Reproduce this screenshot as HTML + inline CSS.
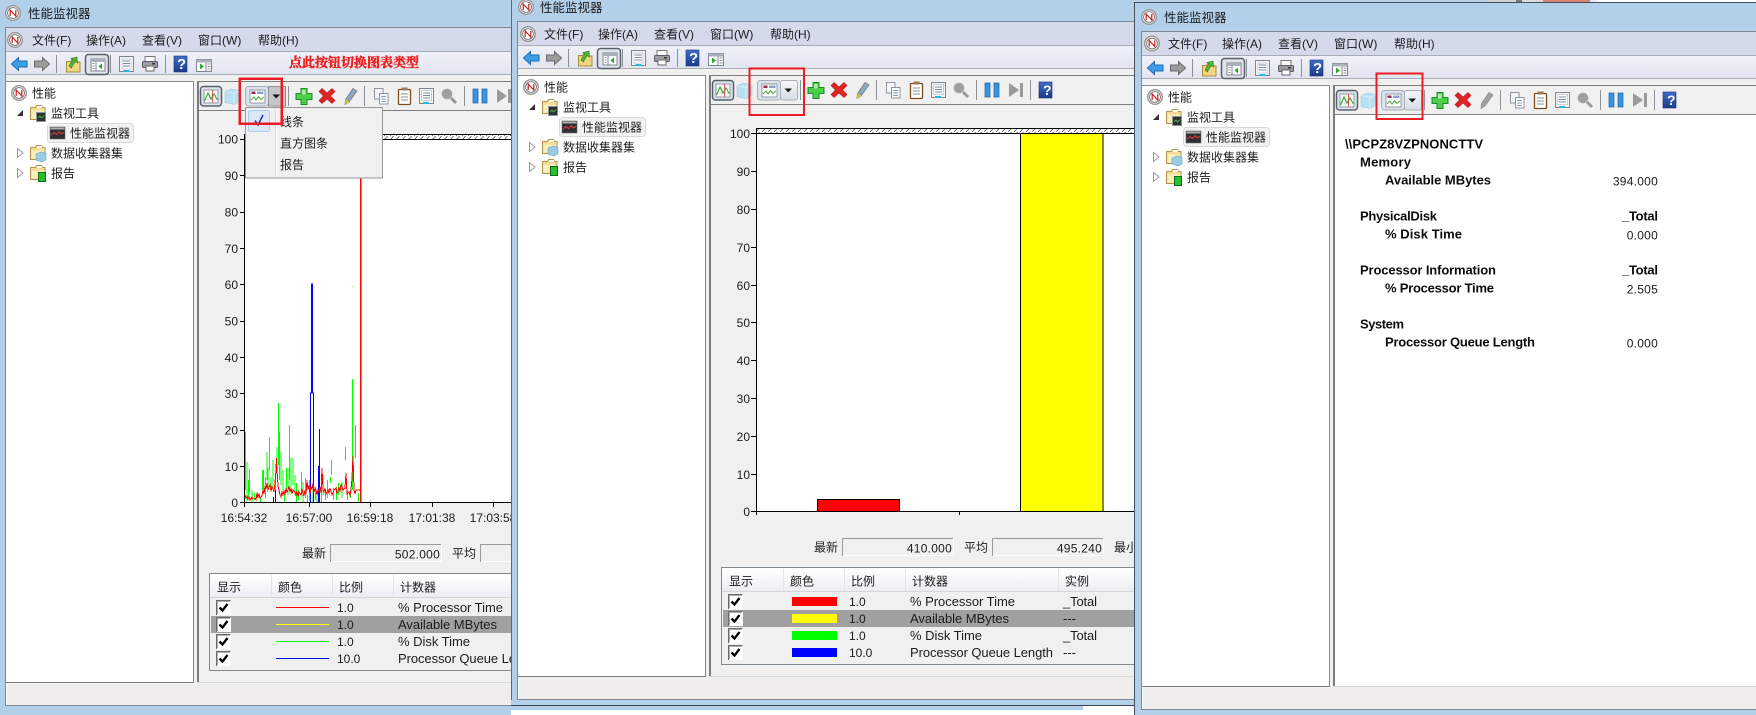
<!DOCTYPE html>
<html lang="zh"><head><meta charset="utf-8"><title>性能监视器</title>
<style>
html,body{margin:0;padding:0;background:#fff;width:1756px;height:715px;overflow:hidden}
svg{display:block}
text{font:12px "Liberation Sans","Noto Sans CJK SC",sans-serif;fill:#1c1c1c;shape-rendering:auto}
.b{font-weight:bold;font-size:13px;fill:#0c0c0c}
.l{font-size:13px}
.v{letter-spacing:.25px}
.ic{shape-rendering:auto}
</style></head><body>
<svg width="1756" height="715" viewBox="0 0 1756 715" xmlns="http://www.w3.org/2000/svg" shape-rendering="crispEdges">
<defs>
<linearGradient id="gt" x1="0" y1="0" x2="0" y2="1"><stop offset="0" stop-color="#eff1f9"/><stop offset="1" stop-color="#e2e5f0"/></linearGradient>
<linearGradient id="gh" x1="0" y1="0" x2="0" y2="1"><stop offset="0" stop-color="#fff"/><stop offset="1" stop-color="#eceef2"/></linearGradient>
<linearGradient id="gq" x1="0" y1="0" x2="0" y2="1"><stop offset="0" stop-color="#3f6cc8"/><stop offset="1" stop-color="#1c3a8c"/></linearGradient>
<linearGradient id="gb" x1="0" y1="0" x2="0" y2="1"><stop offset="0" stop-color="#f5f7fb"/><stop offset="1" stop-color="#d6dce6"/></linearGradient>
<pattern id="hatch" width="6" height="4" patternUnits="userSpaceOnUse"><rect width="6" height="4" fill="#fff"/><path d="M0 4L3.500 0" stroke="#333" stroke-width=".6" shape-rendering="auto"/></pattern>

<g id="logo" class="ic"><circle r="7.300" fill="#f4f2ee" stroke="#9a9896" stroke-width="1.400"/><circle r="5.400" fill="#fff" stroke="#6c6c6c" stroke-width=".8"/><path d="M-2.800 3V-3L2.800 3V-3" fill="none" stroke="#c62020" stroke-width="1.200"/></g>

<g id="folder" class="ic"><path d="M.5 2.500h5l1-2h5l1 2h2.500v12H.5z" fill="#f5dc96" stroke="#ad9550"/><path d="M1.500 5.500h13v8h-13z" fill="#fbeebd"/><rect x="7" y="1" width="5" height="2" fill="#fff"/></g>

<g id="base">
<rect x="-1" y="-10" width="730" height="740" fill="#b3d0eb"/>
<rect x="5" y="27" width="710" height="679" fill="#7f8892"/>
<rect x="6" y="28" width="708" height="677" fill="#f0f0f0"/>
<rect x="6" y="28" width="708" height="23" fill="#d5daea"/>
<rect x="6" y="51" width="708" height="1" fill="#a6aab3"/>
<rect x="6" y="52" width="708" height="22" fill="url(#gt)"/>
<rect x="6" y="74" width="708" height="1" fill="#a9adb7"/>
<rect x="6" y="81" width="187" height="601" fill="#fff"/>
<rect x="6" y="81" width="188" height="1" fill="#8a8a8a"/>
<rect x="193" y="81" width="1" height="602" fill="#8a8a8a"/>
<rect x="6" y="682" width="188" height="1" fill="#7c7c7c"/>
<rect x="197" y="81" width="2" height="602" fill="#7c7c7c"/>
<rect x="197" y="81" width="520" height="1" fill="#7c7c7c"/>
<rect x="199" y="110" width="520" height="1" fill="#808080"/>
<rect x="197" y="682" width="520" height="1" fill="#d8d8d8"/>
<rect x="6" y="683" width="708" height="22" fill="#f0eeed"/>
<rect x="6" y="683" width="1" height="22" fill="#fff"/>
<use href="#tb"/><use href="#ct"/><use href="#tr"/>
</g>

<g id="tb" class="ic">
<path d="M11.500 64L18.500 57.500V61H27V67H18.500V70.500Z" fill="#3c9fe6" stroke="#1c6db4"/>
<path d="M49.500 64L42.500 57.500V61H34.500V67H42.500V70.500Z" fill="#9c9c9c" stroke="#6c6c6c"/>
<path d="M56.500 55V73M110.500 55V73M165.500 55V73" stroke="#8c9099" fill="none"/>
<path d="M66.500 61.500h4l1-1.500h2v2h6.500v10h-13.500z" fill="#f2d582" stroke="#a88c3c"/>
<path d="M69 66Q71 62 73 60L71 58.500L77 57L77.500 63L75.500 61.500Q73 64 71.500 68Z" fill="#52b834" stroke="#2c7a1c" stroke-width=".6"/>
<rect x="85.500" y="54.500" width="23" height="20" rx="3" fill="#dfe3ea" stroke="#59626c" stroke-width="1.500"/>
<rect x="91" y="59" width="14" height="12" fill="#fff" stroke="#7c8490"/><rect x="91" y="59" width="14" height="3" fill="#a8b0bc"/><path d="M96 62V71" stroke="#7c8490"/><path d="M92.500 63.500h2M92.500 66h2M92.500 68.500h2" stroke="#8a94a0"/><path d="M102 63.500L98.500 66.500L102 69.500Z" fill="#2fa52f"/>
<rect x="119.500" y="56.500" width="14" height="15" fill="#f4f6f8" stroke="#7d8792"/><rect x="122" y="59" width="9" height="10" fill="#fff" stroke="#aab2bc" stroke-width=".6"/><path d="M123 61h7M123 63.500h7M123 66h7" stroke="#6f8aa8"/><rect x="123.500" y="70" width="6" height="2" fill="#2ab4e8"/>
<rect x="145" y="56.500" width="10" height="5" fill="#fafafa" stroke="#777"/><rect x="142.500" y="61.500" width="15" height="6" rx="1" fill="#9a9ea4" stroke="#5c6066"/><rect x="146" y="66" width="8" height="5" fill="#fff" stroke="#666"/><rect x="152" y="63" width="3" height="1.500" fill="#333"/>
<rect x="174" y="56" width="13" height="16" fill="url(#gq)" stroke="#1c2f70" stroke-width=".6"/>
<rect x="196.500" y="59.500" width="15" height="12" fill="#fff" stroke="#7c8490"/><rect x="196.500" y="59.500" width="15" height="3" fill="#a8b0bc"/><path d="M206 62.500V71" stroke="#7c8490"/><path d="M207.500 64h3M207.500 66.500h3M207.500 69h3" stroke="#8a94a0"/><path d="M200 63.500L204 66.500L200 69.500Z" fill="#2fa52f"/>
</g>

<g id="ct" class="ic">
<rect x="200.500" y="86.500" width="21" height="19.500" rx="3" fill="#dfe3ea" stroke="#59626c" stroke-width="1.500"/>
<rect x="204" y="90" width="14" height="13" fill="#fff" stroke="#7c8490" stroke-width=".8"/><path d="M209 90V103M213 90V103M204 95H218M204 99H218" stroke="#c8ccd2" stroke-width=".6"/><path d="M204.500 101L208 93L211 99L214 94L217.500 100" fill="none" stroke="#38b038" stroke-width="1.200"/><path d="M212.500 90V103" stroke="#d83a3a" stroke-width=".8"/>
<path d="M225 91.500L231 89L240 90.500V101L234 104.500L225 102.500Z" fill="#b8dff2" stroke="#a0c8dc" stroke-width=".6"/><path d="M225 91.500L234 93.500L240 90.500M234 93.500V104.500" fill="none" stroke="#e8f6fc" stroke-width=".8"/>
<rect x="245.500" y="86.500" width="23" height="19.500" rx="3" fill="#dbe2ee" stroke="#a9aeb6"/>
<rect x="250" y="90" width="15" height="13" fill="#fff" stroke="#7c8490" stroke-width=".8"/><rect x="251.500" y="91.500" width="4" height="2.500" fill="#9c2a4c"/><rect x="257" y="91.500" width="6.500" height="2.500" fill="#86a4d0"/><path d="M251 100L254 97L256 100L258.500 96.500L261 99.500L264 97" fill="none" stroke="#4ca83c"/>
<rect x="268.500" y="86.500" width="17" height="19.500" rx="2" fill="url(#gb)" stroke="#a9aeb6"/>
<path d="M272.500 94.500H280L276.250 98.500Z" fill="#1a1a1a"/>
<path d="M288.500 86V106M364.500 86V106M464.500 86V106" stroke="#8c9099"/>
<path d="M301 88.500H307V93.500H312V99.500H307V104.500H301V99.500H296V93.500H301Z" fill="#4cd04c" stroke="#1a8c2a"/><path d="M302 90H305.500V94.500H302Z" fill="#b0f0a0"/>
<path d="M322 88.500L327 93L332 88.500L335 91.500L330.500 96L335 100.500L332 103.500L327 99L322 103.500L319 100.500L323.500 96L319 91.500Z" fill="#e22323" stroke="#a81c1c" stroke-width=".6"/>
<rect x="374.500" y="88.500" width="8.500" height="10.500" fill="#f6f6f6" stroke="#8b96a3"/><rect x="379.500" y="93.500" width="8.500" height="10.500" fill="#fff" stroke="#8b96a3"/><path d="M381 96.500h5M381 99h5M381 101.500h5" stroke="#4c7eb8" stroke-width=".8"/>
<rect x="398.500" y="89.500" width="12" height="15" rx="1" fill="#fff" stroke="#7e4a20" stroke-width="1.300"/><rect x="401.500" y="87.500" width="6" height="3" fill="#9c7a58"/><path d="M401 94h7M401 97h7M401 100h7" stroke="#8c8c8c"/>
<rect x="419.500" y="88.500" width="14" height="15" fill="#f4f6f8" stroke="#7d8792"/><rect x="421.500" y="90.500" width="10" height="10" fill="#fff" stroke="#aab2bc" stroke-width=".6"/><path d="M423 93h7M423 95.500h7M423 98h7" stroke="#6f8aa8"/><rect x="423" y="102" width="6" height="2" fill="#2ab4e8"/>
<circle cx="447" cy="94" r="5.300" fill="#a0a0a0"/><path d="M451 98L456 103" stroke="#9a9a9a" stroke-width="3"/>
<rect x="473" y="89" width="5" height="14" fill="#3a94dc" stroke="#1c60a8" stroke-width=".7"/><rect x="482" y="89" width="5" height="14" fill="#3a94dc" stroke="#1c60a8" stroke-width=".7"/>
<path d="M497 89L507 96L497 103Z" fill="#9a9a9a"/><rect x="508" y="89" width="3" height="14" fill="#9a9a9a"/>
<path d="M518.500 86V106" stroke="#8c9099"/>
<rect x="527" y="88" width="13" height="16" fill="url(#gq)" stroke="#1c2f70" stroke-width=".6"/>
</g>
<g id="pen" class="ic"><path d="M353 88.500L357 91L349 102L345 104.500L345.500 99.500Z" fill="#8fa9bc" stroke="#5f7484" stroke-width=".7"/><path d="M345 104.500L345.500 99.500L349 102Z" fill="#e8c81c"/></g>

<g id="tr" class="ic">
<use href="#logo" x="19" y="93"/>
<path d="M17 116L23 110V116Z" fill="#333"/>
<use href="#folder" x="30" y="105"/><rect x="36.500" y="112.500" width="9" height="9" fill="#2c3030" stroke="#8e9498"/><path d="M38 118L40 116L41.500 118L44 115.500" fill="none" stroke="#58c858" stroke-width=".8"/>
<rect x="47.500" y="123.500" width="86" height="19" rx="3" fill="#f2f2f2" stroke="#d8d8d8"/>
<rect x="50" y="127" width="15" height="12" fill="#2e2e30" stroke="#6e6e70" stroke-width=".6"/><rect x="50.500" y="127.500" width="14" height="2" fill="#b0b0b0"/><path d="M51 135L54 132.500L56.500 134.500L59.500 131.500L61 134L64 132.500" fill="none" stroke="#e63c3c"/>
<path d="M17.500 148.500L23 153L17.500 157.500Z" fill="#fff" stroke="#9a9a9a"/>
<use href="#folder" x="30" y="145"/><path d="M36 154L41 152L46 153.500V160L42 162L36 160Z" fill="#9ccbe4" stroke="#6ca4c4" stroke-width=".6"/>
<path d="M17.500 168.500L23 173L17.500 177.500Z" fill="#fff" stroke="#9a9a9a"/>
<use href="#folder" x="30" y="165"/><rect x="38.500" y="172.500" width="7" height="9" fill="#2ac02a" stroke="#0c6c1c"/>
</g>

<g id="cb"><rect x="0" y="0" width="15" height="15" fill="#fff"/><path d="M.5 15V.5H14.500" fill="none" stroke="#6a6a6a"/><path d="M1.500 14V1.500H14" fill="none" stroke="#b0b0b0"/><path d="M3.500 7.500L6.500 10.500L11.500 4" fill="none" stroke="#000" stroke-width="2.300" shape-rendering="auto"/></g>

<clipPath id="c1"><rect x="0" y="0" width="511" height="715"/></clipPath>
<clipPath id="c2"><rect x="511" y="0" width="623" height="706"/></clipPath>
<clipPath id="c3"><rect x="1134" y="3" width="622" height="712"/></clipPath>
<g id="legend">
<rect x="209.500" y="573.500" width="700" height="97" fill="#f0f0f0" stroke="#808890"/>
<rect x="210" y="574" width="700" height="23" fill="url(#gh)"/>
<rect x="210" y="597" width="700" height="1" fill="#d6d6d6"/>
<path d="M271.500 575V597M332.500 575V597M393.500 575V597M546.500 575V597" stroke="#e4e4e4"/>
<rect x="211" y="616" width="700" height="17" fill="#a0a0a0"/>
<use href="#cb" x="216" y="600"/><use href="#cb" x="216" y="617"/><use href="#cb" x="216" y="634"/><use href="#cb" x="216" y="651"/>
</g>
<g id="stats">
<rect x="330" y="544" width="111" height="18" fill="#f0f0f0"/><path d="M330.500 562V544.500H441" fill="none" stroke="#9a9a9a"/><path d="M331 561.500H441.500V544" fill="none" stroke="#fff"/>
<rect x="480" y="544" width="111" height="18" fill="#f0f0f0"/><path d="M480.500 562V544.500H591" fill="none" stroke="#9a9a9a"/><path d="M481 561.500H591.500V544" fill="none" stroke="#fff"/>
</g>
</defs>

<rect width="1756" height="715" fill="#fff"/>

<!-- WINDOW 1 -->
<g clip-path="url(#c1)">
<use href="#base"/>
<use href="#pen"/>
<rect x="268.500" y="86.500" width="17" height="19.500" fill="#c4c6ca" stroke="#8e9298"/>
<path d="M272.500 94.500H280L276.250 98.500Z" fill="#111" shape-rendering="auto"/>
<use href="#logo" x="13" y="13"/>
<text x="28" y="18" style="font-size:12.500px">性能监视器</text>
<use href="#logo" x="15" y="40"/>
<text x="32" y="44.500">文件(F)</text><text x="86" y="44.500">操作(A)</text><text x="142" y="44.500">查看(V)</text><text x="198" y="44.500">窗口(W)</text><text x="258" y="44.500">帮助(H)</text>
<text x="177" y="69" style="font-size:15px;font-weight:bold;fill:#fff">?</text>
<text x="289" y="67" stroke="#ee2020" stroke-width=".45" style="font:bold 13px 'Liberation Serif','Noto Serif CJK SC',serif;fill:#ee2020">点此按钮切换图表类型</text>
<text x="32" y="97.500">性能</text><text x="51" y="117.500">监视工具</text><text x="70" y="137.500">性能监视器</text><text x="51" y="157.500">数据收集器集</text><text x="51" y="177.500">报告</text>
<text x="531" y="101" style="font-size:14px;font-weight:bold;fill:#fff">?</text>

<rect x="244" y="134" width="300" height="368" fill="#fff"/>
<rect x="244" y="135" width="300" height="4" fill="url(#hatch)"/>
<rect x="244" y="134" width="300" height="1" fill="#000"/><rect x="244" y="139" width="300" height="1" fill="#000"/>
<rect x="244" y="134" width="1" height="369" fill="#000"/><rect x="244" y="502" width="300" height="1" fill="#000"/>
<path d="M240 139.500h4M240 175.500h4M240 212.500h4M240 248.500h4M240 284.500h4M240 321.500h4M240 357.500h4M240 393.500h4M240 430.500h4M240 466.500h4M240 502.500h4M244.500 503v4M309.500 503v4M370.500 503v4M432.500 503v4M493.500 503v4" stroke="#000"/>
<g text-anchor="end">
<text x="238" y="143.500">100</text><text x="238" y="180">90</text><text x="238" y="216.500">80</text><text x="238" y="253">70</text><text x="238" y="289">60</text><text x="238" y="325.500">50</text><text x="238" y="362">40</text><text x="238" y="398">30</text><text x="238" y="434.500">20</text><text x="238" y="471">10</text><text x="238" y="507">0</text>
</g>
<g text-anchor="middle"><text x="244" y="522">16:54:32</text><text x="309" y="522">16:57:00</text><text x="370" y="522">16:59:18</text><text x="432" y="522">17:01:38</text><text x="493" y="522">17:03:58</text></g>

<path fill="none" stroke="#00ff00" d="M245.500 490V432M247 502V462M248.500 498V480M249.500 492V469M252 502V490M254.500 500V493M257 498V492M260.500 502V497M262.500 490V470M263.500 492V470M265.500 498V477M267 480V452M268 490V468M269.500 470V437M271 492V477M273 488V460M275.500 502V477M277 475V447M278.500 465V403M279.500 480V432M281 485V452M283 490V470M284.500 502V493M286.500 490V468M288 495V468M289.500 480V425M291 490V458M293 485V458M295 495V475M296.500 502V483M298.500 500V490M301.500 495V472M303 502V482M305.500 498V478M307.500 502V495M309.500 500V480M313 502V490M315.500 500V487M317 502V493M319.500 496V473M321.500 502V483M323 495V475M325.500 500V490M327.500 498V480M330.500 483V477M331.500 475V460M333.500 500V488M336.500 500V487M338.500 495V483M342 498V482M345.500 460V447M347.500 500V490M350.500 498V490M352.500 490V379M355.500 458V425M358.500 502V493M353 287V286"/>
<path fill="none" stroke="#0000ff" stroke-width="1" d="M273.500 502V497M275.500 502V490M310.500 502V393H311.500V284H312.500V393H313.500V502M318.500 502V466M319.500 502V429"/>
<polyline fill="none" stroke="#ff0000" points="245,495 246,498 247,496 248,499 249,497 250,500 252,497 253,499 255,498 256,500 257,493 258,497 259,494 260,498 262,496 263,490 264,494 265,486 266,489 267,483 268,490 270,485 271,491 272,487 273,489 274,492 275,483 276,470 276.500,458 277,470 278,486 279,490 280,495 281,497 282,492 283,495 284,491 285,494 286,489 287,492 288,490 289,486 290,492 291,488 292,494 293,490 295,492 296,495 297,491 298,497 299,492 301,495 302,490 303,493 304,496 305,490 306,494 307,480 308,490 309,485 310,494 311,486 312,490 313,483 314,492 315,488 316,490 317,495 318,490 319,492 320,487 321,493 322,468 323,490 324,492 325,488 326,494 328,490 329,493 330,488 332,495 334,490 336,488 337,494 339,487 340,492 341,484 343,490 345,488 346,473 347,494 349,492 350,495 351,490 352,478 353,456 354,490 355,494 356,490 358,490 360,490"/>
<rect x="360" y="139" width="1.500" height="363" fill="#ff0000"/>

<text x="302" y="557.500">最新</text><text x="452" y="557.500">平均</text>
<use href="#stats"/>
<text x="440" y="558.500" text-anchor="end" class="v">502.000</text>

<use href="#legend"/>
<text x="217" y="591.500">显示</text><text x="278" y="591.500">颜色</text><text x="339" y="591.500">比例</text><text x="400" y="591.500">计数器</text>
<rect x="276" y="607" width="53" height="1" fill="#ff0000"/><rect x="276" y="624" width="53" height="1" fill="#ffff00"/><rect x="276" y="641" width="53" height="1" fill="#00ff00"/><rect x="276" y="658" width="53" height="1" fill="#0000ff"/>
<text x="337" y="612">1.0</text><text x="337" y="629">1.0</text><text x="337" y="646">1.0</text><text x="337" y="663">10.0</text>
<text x="398" y="612" class="l" textLength="105">% Processor Time</text><text x="398" y="629" class="l" textLength="99">Available MBytes</text><text x="398" y="646" class="l" textLength="72">% Disk Time</text><text x="398" y="663" class="l" textLength="143">Processor Queue Length</text>

<rect x="245.500" y="107.500" width="137" height="70.500" fill="#f0f0f0" stroke="#979797"/>
<rect x="248.500" y="110.500" width="21" height="21" rx="2" fill="#d9e8fa" stroke="#a8cdf0"/>
<path d="M255 120.500L258 125L263 115" fill="none" stroke="#2a2ab0" stroke-width="1.500" shape-rendering="auto"/>
<rect x="275" y="110" width="1" height="66" fill="#d6d6d6"/><rect x="276" y="110" width="1" height="66" fill="#fff"/>
<text x="280" y="126">线条</text><text x="280" y="147.500">直方图条</text><text x="280" y="169">报告</text>
<rect x="239.500" y="78.500" width="42" height="45" fill="none" stroke="#ed1c24" stroke-width="2.500"/>
</g>

<!-- WINDOW 2 -->
<g clip-path="url(#c2)">
<g transform="translate(512,-6)">
<use href="#base"/>
<use href="#pen"/>
<use href="#logo" x="14" y="13"/>
<text x="28" y="18" style="font-size:12.500px">性能监视器</text>
<use href="#logo" x="16" y="40"/>
<text x="32" y="44.500">文件(F)</text><text x="86" y="44.500">操作(A)</text><text x="142" y="44.500">查看(V)</text><text x="198" y="44.500">窗口(W)</text><text x="258" y="44.500">帮助(H)</text>
<text x="177" y="69" style="font-size:15px;font-weight:bold;fill:#fff">?</text>
<text x="32" y="97.500">性能</text><text x="51" y="117.500">监视工具</text><text x="70" y="137.500">性能监视器</text><text x="51" y="157.500">数据收集器集</text><text x="51" y="177.500">报告</text>
<text x="531" y="101" style="font-size:14px;font-weight:bold;fill:#fff">?</text>
<text x="302" y="557.500">最新</text><text x="452" y="557.500">平均</text><text x="602" y="557.500">最小</text>
<use href="#stats"/>
<text x="440" y="558.500" text-anchor="end" class="v">410.000</text><text x="590" y="558.500" text-anchor="end" class="v">495.240</text>
<use href="#legend"/>
<text x="217" y="591.500">显示</text><text x="278" y="591.500">颜色</text><text x="339" y="591.500">比例</text><text x="400" y="591.500">计数器</text><text x="553" y="591.500">实例</text>
<rect x="280" y="603" width="45" height="9" fill="#ff0000"/><rect x="280" y="620" width="45" height="9" fill="#ffff00"/><rect x="280" y="637" width="45" height="9" fill="#00ff00"/><rect x="280" y="654" width="45" height="9" fill="#0000ff"/>
<text x="337" y="612">1.0</text><text x="337" y="629">1.0</text><text x="337" y="646">1.0</text><text x="337" y="663">10.0</text>
<text x="398" y="612" class="l" textLength="105">% Processor Time</text><text x="398" y="629" class="l" textLength="99">Available MBytes</text><text x="398" y="646" class="l" textLength="72">% Disk Time</text><text x="398" y="663" class="l" textLength="143">Processor Queue Length</text>
<text x="551" y="612" class="l" textLength="34">_Total</text><text x="551" y="629" class="l">---</text><text x="551" y="646" class="l" textLength="34">_Total</text><text x="551" y="663" class="l">---</text>
</g>
<rect x="511" y="0" width="1" height="715" fill="#5a6a7a"/>
<rect x="756" y="128" width="380" height="384" fill="#fff"/>
<rect x="756" y="129" width="380" height="4" fill="url(#hatch)"/>
<rect x="756" y="128" width="380" height="1" fill="#000"/><rect x="756" y="133" width="380" height="1" fill="#000"/>
<rect x="817.500" y="499.500" width="82" height="12" fill="#ff0000" stroke="#000"/>
<rect x="1020.500" y="133.500" width="82.500" height="378" fill="#ffff00" stroke="#000"/>
<rect x="756" y="128" width="1" height="384" fill="#000"/><rect x="756" y="511" width="380" height="1" fill="#000"/>
<path d="M751 133.500h5M751 171.500h5M751 209.500h5M751 247.500h5M751 285.500h5M751 322.500h5M751 360.500h5M751 398.500h5M751 436.500h5M751 474.500h5M751 511.500h5M756.500 512v3M959.500 512v3" stroke="#000"/>
<g text-anchor="end">
<text x="750" y="138">100</text><text x="750" y="176">90</text><text x="750" y="214">80</text><text x="750" y="252">70</text><text x="750" y="290">60</text><text x="750" y="327">50</text><text x="750" y="365">40</text><text x="750" y="403">30</text><text x="750" y="441">20</text><text x="750" y="479">10</text><text x="750" y="516">0</text>
</g>
<rect x="749.500" y="68.500" width="54.500" height="46.500" fill="none" stroke="#ed1c24" stroke-width="2"/>
</g>
<rect x="511" y="700" width="572" height="5" fill="#b3d0eb"/>
<rect x="511" y="705" width="572" height="1" fill="#3c4652"/>
<rect x="511" y="706" width="572" height="4" fill="#b3d0eb"/>
<rect x="1083" y="700" width="51" height="5" fill="#b3d0eb"/><rect x="1083" y="705" width="51" height="1" fill="#3c4652"/>

<!-- strip above window 3 -->
<rect x="1134" y="0" width="354" height="2" fill="#b8d2ea"/>
<rect x="1488" y="0" width="28" height="2" fill="#d0d2d4"/><rect x="1516" y="0" width="6" height="2" fill="#777"/><rect x="1522" y="0" width="21" height="2" fill="#d8dade"/><rect x="1543" y="0" width="47" height="2" fill="#d98472"/><rect x="1590" y="0" width="7" height="2" fill="#e8e8ee"/>
<rect x="1134" y="2" width="622" height="1" fill="#46505c"/>

<!-- WINDOW 3 -->
<g clip-path="url(#c3)">
<g transform="translate(1136,4)">
<use href="#base"/>
<use href="#logo" x="13" y="13"/>
<text x="28" y="18" style="font-size:12.500px">性能监视器</text>
<use href="#logo" x="16" y="39.500"/>
<text x="32" y="44">文件(F)</text><text x="86" y="44">操作(A)</text><text x="142" y="44">查看(V)</text><text x="198" y="44">窗口(W)</text><text x="258" y="44">帮助(H)</text>
<text x="177" y="69" style="font-size:15px;font-weight:bold;fill:#fff">?</text>
<text x="32" y="97.500">性能</text><text x="51" y="117.500">监视工具</text><text x="70" y="137.500">性能监视器</text><text x="51" y="157.500">数据收集器集</text><text x="51" y="177.500">报告</text>
<text x="531" y="101" style="font-size:14px;font-weight:bold;fill:#fff">?</text>
<rect x="199" y="111" width="520" height="571" fill="#fff"/>
<path d="M353 88.500L357 91L349 102L345 104.500L345.500 99.500Z" fill="#a0a0a0" stroke="#8c8c8c" stroke-width=".7" shape-rendering="auto"/>
</g>
<rect x="1134" y="0" width="1" height="715" fill="#46505c"/>
<text x="1345" y="148.500" class="b" textLength="138">\\PCPZ8VZPNONCTTV</text>
<text x="1360" y="166.500" class="b" textLength="51">Memory</text>
<text x="1385" y="184.500" class="b" textLength="106">Available MBytes</text>
<text x="1658" y="185.500" text-anchor="end" class="v">394.000</text>
<text x="1360" y="220.500" class="b" textLength="77">PhysicalDisk</text>
<text x="1622" y="220.500" class="b" textLength="36">_Total</text>
<text x="1385" y="238.500" class="b" textLength="77">% Disk Time</text>
<text x="1658" y="239.500" text-anchor="end" class="v">0.000</text>
<text x="1360" y="274.500" class="b" textLength="136">Processor Information</text>
<text x="1622" y="274.500" class="b" textLength="36">_Total</text>
<text x="1385" y="292.500" class="b" textLength="109">% Processor Time</text>
<text x="1658" y="293.500" text-anchor="end" class="v">2.505</text>
<text x="1360" y="328.500" class="b" textLength="44">System</text>
<text x="1385" y="346.500" class="b" textLength="150">Processor Queue Length</text>
<text x="1658" y="347.500" text-anchor="end" class="v">0.000</text>
<rect x="1376.500" y="73.500" width="46" height="45.500" fill="none" stroke="#ed1c24" stroke-width="2"/>
</g>
</svg>
</body></html>
